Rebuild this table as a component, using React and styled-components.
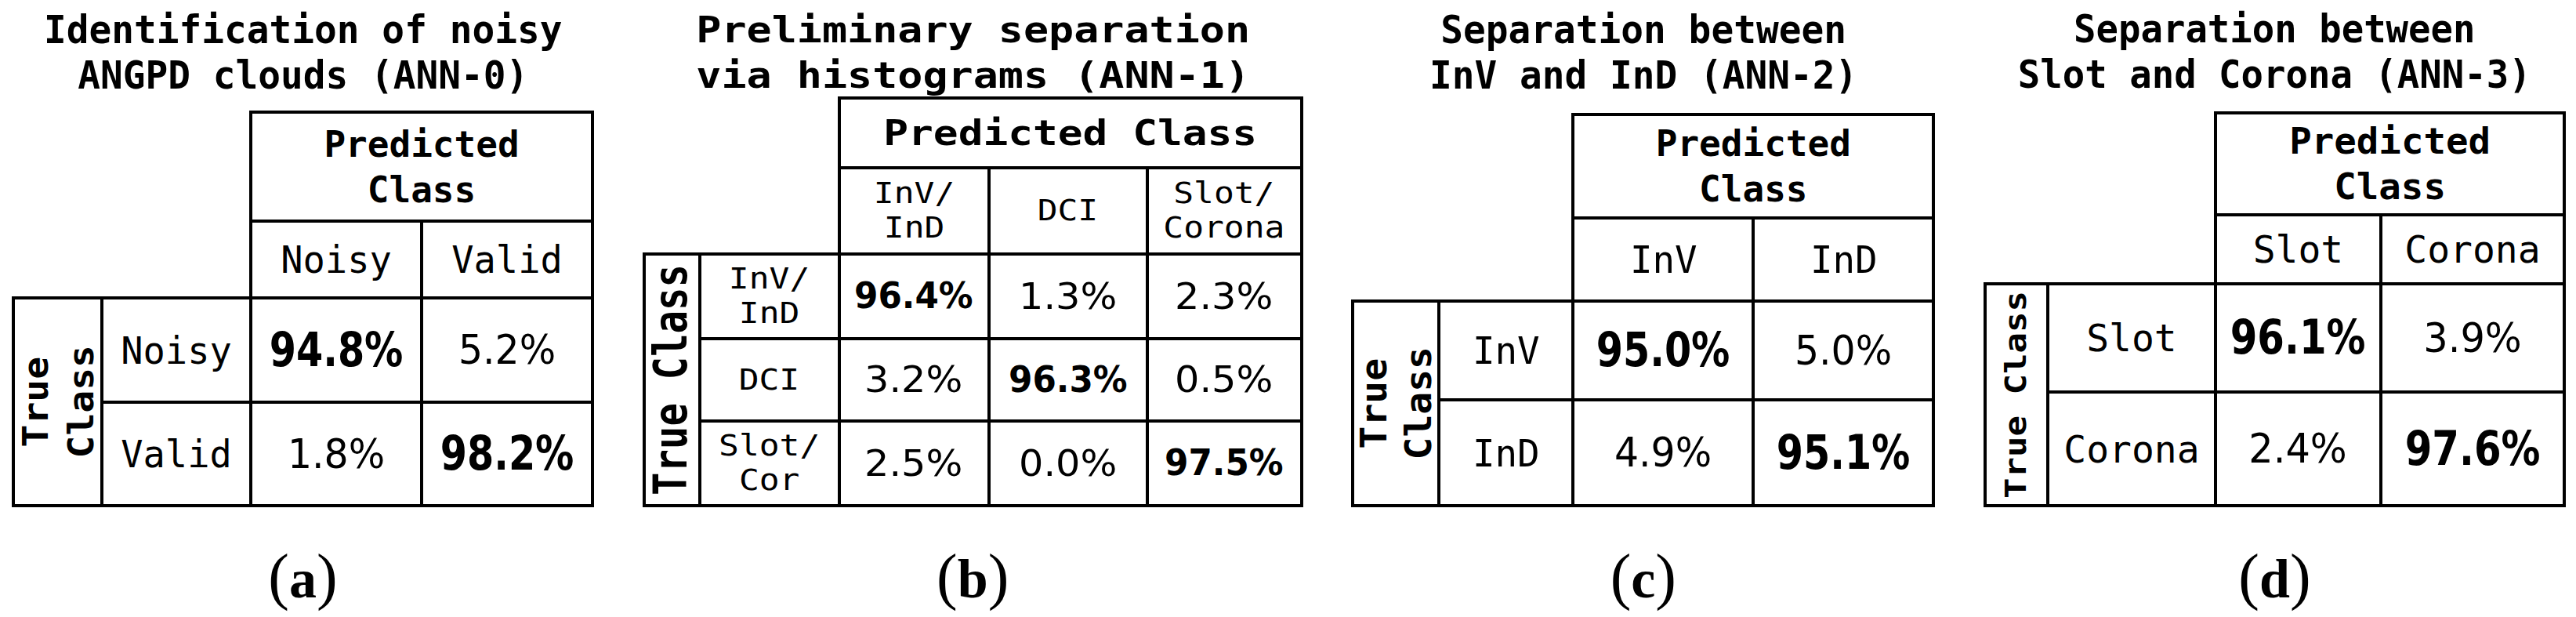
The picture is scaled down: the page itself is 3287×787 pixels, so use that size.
import React from "react";
import styled, { createGlobalStyle } from "styled-components";

const GlobalStyle = createGlobalStyle`
  html, body {
    margin: 0;
    padding: 0;
    background: #ffffff;
  }
  body {
    width: 3287px;
    height: 787px;
    overflow: hidden;
  }
`;

const Figure = styled.main`
  box-sizing: border-box;
  width: 3287px;
  height: 787px;
  padding: 9px 15px 0 17px;
  display: flex;
  justify-content: space-between;
  align-items: flex-start;
  color: #000;
`;

const Panel = styled.section`
  width: ${(p) => p.$w}px;
  display: flex;
  flex-direction: column;
  align-items: center;
`;

const Title = styled.h2`
  margin: 0;
  height: 116px;
  font-family: "DejaVu Sans Mono", monospace;
  font-weight: 700;
  font-size: ${(p) => p.$f}px;
  line-height: 58px;
  white-space: pre;
  text-align: center;
  transform: scaleX(${(p) => p.$k});
`;

const TableArea = styled.div`
  align-self: stretch;
  height: 520px;
  display: flex;
  align-items: flex-end;
`;

const Matrix = styled.div`
  width: 100%;
  display: grid;
  grid-template-columns: ${(p) => p.$cols.map((c) => `${c}px`).join(" ")};
  grid-template-rows: ${(p) => p.$rows.map((r) => `${r}px`).join(" ")};
`;

const Cell = styled.div`
  grid-column: span ${(p) => p.$cs || 1};
  grid-row: span ${(p) => p.$rs || 1};
  min-width: 0;
  min-height: 0;
  display: flex;
  align-items: center;
  justify-content: center;
  outline: 4px solid #000;
  outline-offset: -2px;
`;

const Corner = styled.div`
  grid-column: span 2;
  grid-row: span 2;
`;

const Mono = styled.span`
  display: block;
  font-family: "DejaVu Sans Mono", monospace;
  font-weight: ${(p) => (p.$bold ? 700 : 400)};
  font-size: ${(p) => p.$f}px;
  line-height: ${(p) => (p.$lh ? `${p.$lh}px` : "1.164")};
  white-space: pre;
  text-align: center;
  transform: scaleX(${(p) => p.$k});
`;

const Vertical = styled(Mono)`
  writing-mode: vertical-rl;
  transform: rotate(180deg) scaleX(${(p) => p.$k});
`;

const Value = styled.span`
  display: block;
  font-family: "DejaVu Sans", sans-serif;
  font-weight: ${(p) => (p.$bold ? 700 : 400)};
  font-size: ${(p) => p.$f}px;
  line-height: 1.164;
  white-space: nowrap;
  transform: scaleX(${(p) => p.$k});
`;

const Caption = styled.div`
  margin-top: 50px;
  height: 80px;
  font-family: "Liberation Serif", "Times New Roman", serif;
  font-size: 80px;
  line-height: 80px;
  white-space: nowrap;
`;

const CaptionLetter = styled.span`
  font-size: 70px;
  font-weight: 700;
`;

const panels = [
  {
    id: "a",
    cols: [113, 190, 218, 218],
    rows: [139, 98, 133, 132],
    title: "Identification of noisy\nANGPD clouds (ANN-0)",
    titleF: 49.5,
    titleK: 0.965,
    head: "Predicted\nClass",
    headF: 46,
    headK: 1.0,
    headLH: 58,
    tc: "True\nClass",
    tcF: 48,
    tcK: 0.93,
    tcLH: 62,
    labF: 48.5,
    labK: 0.97,
    labLH: 56,
    subs: ["Noisy", "Valid"],
    body: [
      ["Noisy", [["94.8%", true], ["5.2%"]]],
      ["Valid", [["1.8%"], ["98.2%", true]]],
    ],
    valF: 52,
    valK: 0.94,
    boldF: 60,
    boldK: 0.82,
  },
  {
    id: "b",
    cols: [71, 178, 191, 202, 197],
    rows: [89, 110, 108, 105, 108],
    title: "Preliminary separation\nvia histograms (ANN-1)",
    titleF: 46,
    titleK: 1.16,
    head: "Predicted Class",
    headF: 44,
    headK: 1.2,
    headLH: 52,
    tc: "True Class",
    tcF: 49,
    tcK: 1.2,
    tcLH: 52,
    labF: 37,
    labK: 1.16,
    labLH: 44,
    subs: ["InV/\nInD", "DCI", "Slot/\nCorona"],
    body: [
      ["InV/\nInD", [["96.4%", true], ["1.3%"], ["2.3%"]]],
      ["DCI", [["3.2%"], ["96.3%", true], ["0.5%"]]],
      ["Slot/\nCor", [["2.5%"], ["0.0%"], ["97.5%", true]]],
    ],
    valF: 47,
    valK: 1.05,
    boldF: 46,
    boldK: 0.95,
  },
  {
    id: "c",
    cols: [110, 171, 230, 230],
    rows: [132, 106, 126, 135],
    title: "Separation between\nInV and InD (ANN-2)",
    titleF: 49.5,
    titleK: 0.965,
    head: "Predicted\nClass",
    headF: 46,
    headK: 1.0,
    headLH: 58,
    tc: "True\nClass",
    tcF: 48,
    tcK: 0.96,
    tcLH: 60,
    labF: 48.5,
    labK: 0.98,
    labLH: 56,
    subs: ["InV", "InD"],
    body: [
      ["InV", [["95.0%", true], ["5.0%"]]],
      ["InD", [["4.9%"], ["95.1%", true]]],
    ],
    valF: 52,
    valK: 0.94,
    boldF: 60,
    boldK: 0.82,
  },
  {
    id: "d",
    cols: [80, 214, 211, 234],
    rows: [130, 88, 138, 145],
    title: "Separation between\nSlot and Corona (ANN-3)",
    titleF: 49,
    titleK: 0.965,
    head: "Predicted\nClass",
    headF: 46,
    headK: 1.03,
    headLH: 58,
    tc: "True Class",
    tcF: 44,
    tcK: 0.83,
    tcLH: 52,
    labF: 48,
    labK: 1.0,
    labLH: 56,
    subs: ["Slot", "Corona"],
    body: [
      ["Slot", [["96.1%", true], ["3.9%"]]],
      ["Corona", [["2.4%"], ["97.6%", true]]],
    ],
    valF: 52,
    valK: 0.95,
    boldF: 60,
    boldK: 0.83,
  },
];

function ConfusionPanel({ p }) {
  const width = p.cols.reduce((s, c) => s + c, 0);
  const n = p.subs.length;
  return (
    <Panel $w={width}>
      <Title $f={p.titleF} $k={p.titleK}>
        {p.title}
      </Title>
      <TableArea>
        <Matrix $cols={p.cols} $rows={p.rows}>
          <Corner />
          <Cell $cs={n}>
            <Mono $bold $f={p.headF} $k={p.headK} $lh={p.headLH}>
              {p.head}
            </Mono>
          </Cell>
          {p.subs.map((s) => (
            <Cell key={s}>
              <Mono $f={p.labF} $k={p.labK} $lh={p.labLH}>
                {s}
              </Mono>
            </Cell>
          ))}
          {p.body.map(([label, values], ri) => (
            <React.Fragment key={label}>
              {ri === 0 && (
                <Cell $rs={p.body.length}>
                  <Vertical $bold $f={p.tcF} $k={p.tcK} $lh={p.tcLH}>
                    {p.tc}
                  </Vertical>
                </Cell>
              )}
              <Cell>
                <Mono $f={p.labF} $k={p.labK} $lh={p.labLH}>
                  {label}
                </Mono>
              </Cell>
              {values.map(([v, bold], ci) => (
                <Cell key={ci}>
                  <Value
                    $bold={bold}
                    $f={bold ? p.boldF : p.valF}
                    $k={bold ? p.boldK : p.valK}
                  >
                    {v}
                  </Value>
                </Cell>
              ))}
            </React.Fragment>
          ))}
        </Matrix>
      </TableArea>
      <Caption>
        (<CaptionLetter>{p.id}</CaptionLetter>)
      </Caption>
    </Panel>
  );
}

export default function App() {
  return (
    <>
      <GlobalStyle />
      <Figure>
        {panels.map((p) => (
          <ConfusionPanel key={p.id} p={p} />
        ))}
      </Figure>
    </>
  );
}
